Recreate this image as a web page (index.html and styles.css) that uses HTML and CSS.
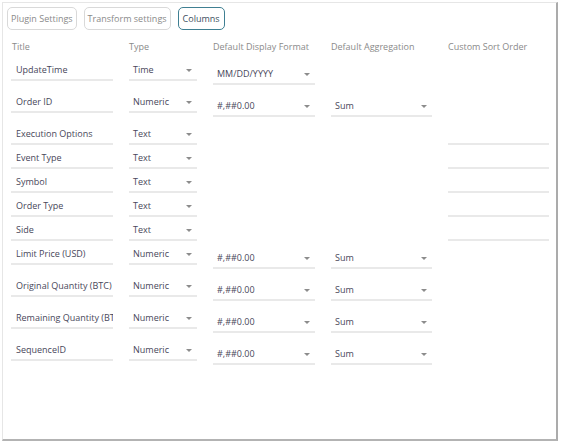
FILE: index.html
```html
<!DOCTYPE html>
<html lang="en">
<head>
  <meta charset="UTF-8">
  <title>Columns</title>
  <link rel="stylesheet" href="styles.css">
</head>
<body>
  <div class="panel">
    <div class="tabs">
      <button class="tab">Plugin Settings</button>
      <button class="tab">Transform settings</button>
      <button class="tab active">Columns</button>
    </div>

    <div class="columns">
      <div class="row head">
        <div class="head-cell first">Title</div>
        <div class="head-cell">Type</div>
        <div class="head-cell">Default Display Format</div>
        <div class="head-cell">Default Aggregation</div>
        <div class="head-cell">Custom Sort Order</div>
      </div>

      <div class="row fmt">
        <div class="field">UpdateTime</div>
        <div class="field select">Time</div>
        <div class="field select low">MM/DD/YYYY</div>
        <div></div>
        <div></div>
      </div>
      <div class="row fmt">
        <div class="field">Order ID</div>
        <div class="field select">Numeric</div>
        <div class="field select low">#,##0.00</div>
        <div class="field select low">Sum</div>
        <div></div>
      </div>
      <div class="row">
        <div class="field">Execution Options</div>
        <div class="field select">Text</div>
        <div></div>
        <div></div>
        <div class="field"></div>
      </div>
      <div class="row">
        <div class="field">Event Type</div>
        <div class="field select">Text</div>
        <div></div>
        <div></div>
        <div class="field"></div>
      </div>
      <div class="row">
        <div class="field">Symbol</div>
        <div class="field select">Text</div>
        <div></div>
        <div></div>
        <div class="field"></div>
      </div>
      <div class="row">
        <div class="field">Order Type</div>
        <div class="field select">Text</div>
        <div></div>
        <div></div>
        <div class="field"></div>
      </div>
      <div class="row">
        <div class="field">Side</div>
        <div class="field select">Text</div>
        <div></div>
        <div></div>
        <div class="field"></div>
      </div>
      <div class="row fmt">
        <div class="field">Limit Price (USD)</div>
        <div class="field select">Numeric</div>
        <div class="field select low">#,##0.00</div>
        <div class="field select low">Sum</div>
        <div></div>
      </div>
      <div class="row fmt">
        <div class="field">Original Quantity (BTC)</div>
        <div class="field select">Numeric</div>
        <div class="field select low">#,##0.00</div>
        <div class="field select low">Sum</div>
        <div></div>
      </div>
      <div class="row fmt">
        <div class="field">Remaining Quantity (BTC)</div>
        <div class="field select">Numeric</div>
        <div class="field select low">#,##0.00</div>
        <div class="field select low">Sum</div>
        <div></div>
      </div>
      <div class="row fmt">
        <div class="field">SequenceID</div>
        <div class="field select">Numeric</div>
        <div class="field select low">#,##0.00</div>
        <div class="field select low">Sum</div>
        <div></div>
      </div>
    </div>
  </div>
</body>
</html>
```

FILE: styles.css
```css
body {
  margin: 0;
  background: #fff;
  font-family: 'Open Sans', 'Liberation Sans', sans-serif;
  font-size: 9px;
  color: #48475a;
}
.panel {
  box-sizing: border-box;
  width: 556px;
  height: 439px;
  margin: 2px 0 0 2px;
  padding: 4px;
  border: 1px solid #e6e6e6;
  border-right: 2px solid #ababab;
  border-bottom: 2px solid #b3b3b3;
}
.tabs {
  display: flex;
  gap: 7px;
}
.tab {
  height: 23px;
  padding: 0 3px;
  border: 1px solid #d9d9d9;
  border-radius: 5px;
  background: #fff;
  font-family: inherit;
  font-size: 9px;
  color: #8a8a8a;
}
.tab.active {
  padding: 0 4px;
  border: 1.5px solid #3f7f92;
  color: #3d4f60;
}
.columns {
  margin: 10px 0 0 4px;
}
.row {
  display: grid;
  grid-template-columns: 102px 68px 102px 101px 101px;
  column-gap: 16px;
  align-items: start;
  height: 24px;
}
.row.fmt {
  height: 32px;
}
.row.head {
  height: 21px;
}
.head-cell {
  line-height: 14px;
  color: #8a8a8a;
}
.head-cell.first {
  padding-left: 1px;
}
.field {
  position: relative;
  height: 18px;
  line-height: 18px;
  padding-left: 5px;
  border-bottom: 2px solid #e9e9e9;
  white-space: nowrap;
  overflow: hidden;
}
.select {
  padding-left: 4px;
}
.select::after {
  content: '';
  position: absolute;
  right: 5px;
  top: 8px;
  border-left: 3px solid transparent;
  border-right: 3px solid transparent;
  border-top: 3px solid #8c8c8c;
}
.low {
  margin-top: 4px;
}
```
